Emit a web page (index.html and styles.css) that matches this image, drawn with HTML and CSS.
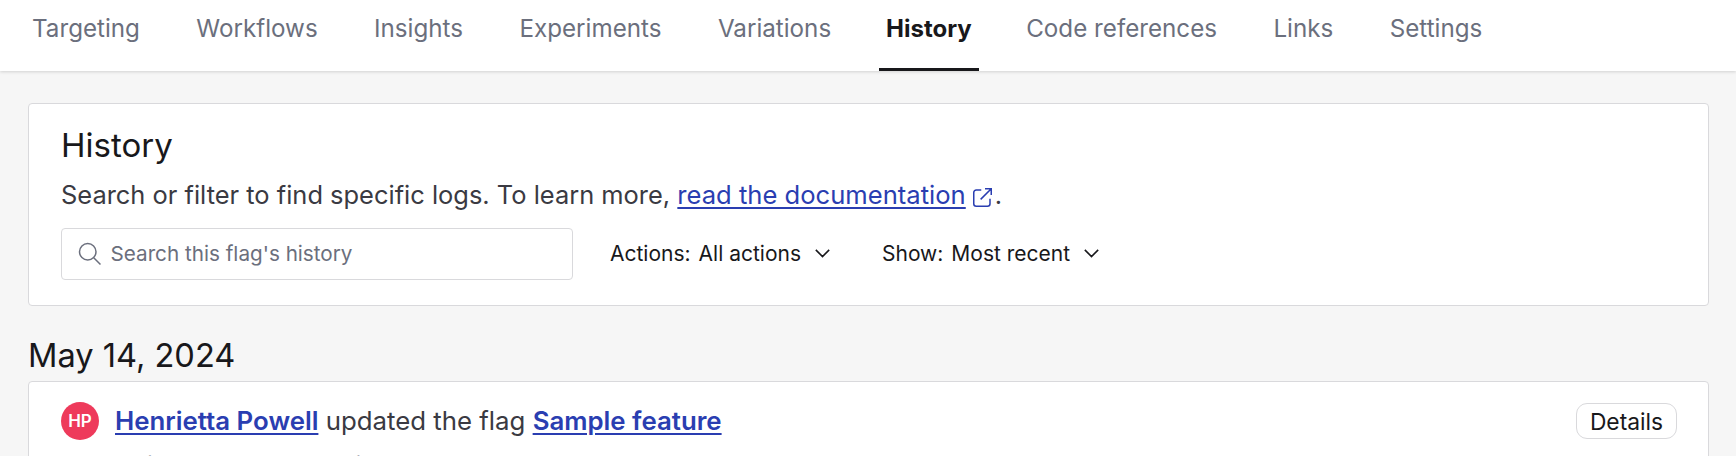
FILE: index.html
```html
<!DOCTYPE html>
<html lang="en">
<head>
<meta charset="utf-8">
<title>History</title>
<link rel="stylesheet" href="styles.css">
</head>
<body>
<nav class="tabs">
  <a class="tab">Targeting</a>
  <a class="tab">Workflows</a>
  <a class="tab">Insights</a>
  <a class="tab">Experiments</a>
  <a class="tab">Variations</a>
  <a class="tab active">History</a>
  <a class="tab">Code references</a>
  <a class="tab">Links</a>
  <a class="tab">Settings</a>
</nav>
<main class="content">
  <section class="card head-card">
    <h1 class="title">History</h1>
    <p class="desc">Search or filter to find specific logs. To learn more, <a class="link">read the documentation</a><svg class="ext" viewBox="0 0 20 20" fill="none" stroke="currentColor" stroke-width="1.2"><path d="M9 4H5a2 2 0 0 0-2 2v9a2 2 0 0 0 2 2h9a2 2 0 0 0 2-2v-4"/><path d="M8.5 11.5 17 3M12 3h5v5"/></svg>.</p>
    <div class="filters">
      <div class="search">
        <svg class="search-icon" viewBox="0 0 20 20" fill="none" stroke="currentColor" stroke-width="1.2"><circle cx="8.6" cy="8.6" r="6.6"/><path d="m13.4 13.4 5.4 5.4"/></svg>
        <span class="placeholder">Search this flag's history</span>
      </div>
      <div class="filter"><span>Actions:</span><span>All actions</span><svg class="chev" viewBox="0 0 14 14" fill="none" stroke="currentColor" stroke-width="1.3"><path d="m1.5 4 5.5 5.5L12.5 4"/></svg></div>
      <div class="filter"><span>Show:</span><span>Most recent</span><svg class="chev" viewBox="0 0 14 14" fill="none" stroke="currentColor" stroke-width="1.3"><path d="m1.5 4 5.5 5.5L12.5 4"/></svg></div>
    </div>
  </section>
  <h2 class="date">May 14, 2024</h2>
  <section class="card entry">
    <div class="row">
      <span class="avatar">HP</span>
      <p class="line"><a class="link strong">Henrietta Powell</a> updated the flag <a class="link strong">Sample feature</a></p>
      <button class="details">Details</button>
    </div>
    <p class="sub">Main account · Production</p>
  </section>
</main>
</body>
</html>
```
FILE: styles.css
```css
* { box-sizing: border-box; }
html, body { margin: 0; height: 100%; overflow: hidden; }
body { background: #f6f6f6; font-family: Inter, "Liberation Sans", sans-serif; color: #18181b; }
.tabs { display: flex; gap: 42.4px; height: 71px; padding-left: 25px; background: #fff; box-shadow: 0 1px 3px rgba(0,0,0,.15); }
.tab { display: flex; align-items: center; padding: 0 7px 10px; height: 71px; font-size: 24.2px; line-height: 28px; color: #6b6f7d; border-bottom: 3px solid transparent; }
.tab.active { margin: 0 -2px 0 -1.5px; color: #18181b; font-size: 24px; font-weight: 700; border-bottom-color: #18181b; }
.content { padding: 32px 27px 0 28px; }
.card { background: #fff; border: 1px solid #d9d9dc; border-radius: 4px; }
.head-card { height: 203px; padding: 21px 32px 0 32px; }
.title { margin: 0; font-size: 33px; line-height: 40px; font-weight: 400; }
.desc { margin: 13px 0 0; font-size: 25.45px; line-height: 34px; color: #3a3a42; }
.link { color: #2a3eb1; text-decoration: underline; text-underline-offset: 3px; }
.desc .link { font-size: 25.6px; }
.ext { width: 25px; height: 25px; margin-left: 4px; vertical-align: -6px; color: #2a3eb1; }
.filters { display: flex; align-items: center; margin-top: 16px; }
.search { display: flex; align-items: center; gap: 9px; width: 512px; height: 52px; padding: 0 0 2px 14.5px; border: 1px solid #d9d9dc; border-radius: 4px; }
.search-icon { width: 25px; height: 25px; color: #6b6f7d; }
.placeholder { font-size: 20.7px; color: #6b6f7d; }
.filter { display: flex; align-items: center; gap: 8px; margin-left: 37px; padding-bottom: 2px; font-size: 21px; }
.filter + .filter { margin-left: 51px; }
.chev { width: 17px; height: 17px; margin-left: 5px; }
.date { margin: 29px 0 0; font-size: 32.6px; line-height: 40px; font-weight: 400; }
.entry { margin-top: 6px; padding: 20px 31px 0 32px; height: 200px; }
.row { display: flex; align-items: center; height: 38px; }
.avatar { display: flex; align-items: center; justify-content: center; width: 38px; height: 38px; border-radius: 50%; background: #ee3a5b; color: #fff; font-size: 17px; font-weight: 600; }
.line { margin: 0 0 0 16px; flex: 1; font-size: 25.8px; line-height: 32px; color: #3a3a42; }
.strong { font-weight: 600; }
.details { height: 36px; width: 101px; padding: 0; background: #fff; border: 1px solid #d9d9dc; border-radius: 11px; font: 400 22.8px Inter, "Liberation Sans", sans-serif; color: #18181b; }
.sub { margin: 11px 0 0 54px; font-size: 22px; line-height: 26px; color: #6b6f7d; }
```
